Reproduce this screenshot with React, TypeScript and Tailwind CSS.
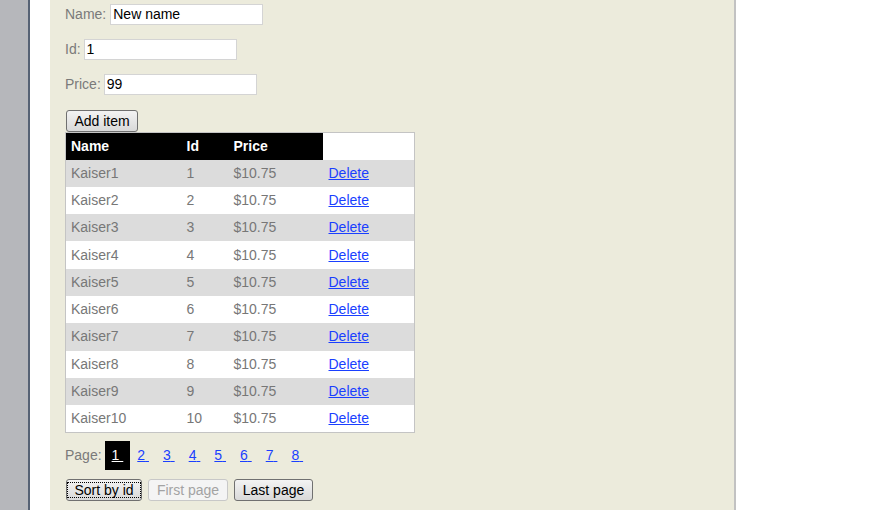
import React from 'react';

const rows = Array.from({ length: 10 }, (_, i) => ({ name: `Kaiser${i + 1}`, id: i + 1, price: '$10.75' }));
const pages = [2, 3, 4, 5, 6, 7, 8];

const btn =
  'h-[22px] px-0 whitespace-nowrap rounded-[3px] border border-[#707070] bg-gradient-to-b from-[#f3f3f3] to-[#d9d9d9] text-black text-[14px] leading-none';

export default function App() {
  return (
    <div className="flex h-[510px] w-full bg-white text-[14px] font-['Liberation_Sans',Arial,sans-serif] overflow-hidden">
      <div className="w-[28px] shrink-0 bg-[#b6b7bb]" />
      <div className="w-[2px] shrink-0 bg-[#566274]" />
      <div className="w-[20px] shrink-0 bg-white" />
      <div className="w-[684px] shrink-0 bg-[#ecebdc] pl-[15px] pt-[4px] flex flex-col items-start">
        <div className="flex items-center h-[21px] gap-[4px]">
          <span className="text-[#7a7a7a]">Name:</span>
          <input
            defaultValue="New name"
            className="w-[153px] h-[21px] bg-white border border-[#d4d4d4] px-[2px] text-black text-[14px] outline-none"
          />
        </div>
        <div className="flex items-center h-[21px] gap-[3px] mt-[14px]">
          <span className="text-[#7a7a7a]">Id:</span>
          <input
            defaultValue="1"
            className="w-[153px] h-[21px] bg-white border border-[#d4d4d4] px-[2px] text-black text-[14px] outline-none"
          />
        </div>
        <div className="flex items-center h-[21px] gap-[3px] mt-[14px]">
          <span className="text-[#7a7a7a]">Price:</span>
          <input
            defaultValue="99"
            className="w-[153px] h-[21px] bg-white border border-[#d4d4d4] px-[2px] text-black text-[14px] outline-none"
          />
        </div>
        <button className={`${btn} mt-[15px] ml-[1px] h-[21px] w-[72px]`}>Add item</button>
        <table className="w-[350px] border border-[#c4c4c4] bg-white border-collapse">
          <thead>
            <tr className="h-[27px]">
              <th className="w-[116px] bg-black text-white text-left font-bold pl-[5px]">Name</th>
              <th className="w-[47px] bg-black text-white text-left font-bold pl-[5px]">Id</th>
              <th className="w-[94px] bg-black text-white text-left font-bold pl-[5px]">Price</th>
              <th className="bg-white" />
            </tr>
          </thead>
          <tbody>
            {rows.map((r, i) => (
              <tr key={r.id} className={`h-[27.3px] ${i % 2 === 0 ? 'bg-[#dcdcdc]' : 'bg-white'} text-[#777777]`}>
                <td className="pl-[5px]">{r.name}</td>
                <td className="pl-[5px]">{r.id}</td>
                <td className="pl-[5px]">{r.price}</td>
                <td className="pl-[6px]">
                  <a href="#" className="text-[#1a3fff] underline">Delete</a>
                </td>
              </tr>
            ))}
          </tbody>
        </table>
        <div className="flex items-center mt-[8px] h-[29px]">
          <span className="text-[#7a7a7a] mr-[3px]">Page:</span>
          <span className="bg-black px-[7px] h-[29px] flex items-center">
            <a href="#" className="text-white underline">1&nbsp;</a>
          </span>
          {pages.map((p) => (
            <span key={p} className="px-[7px] h-[29px] flex items-center">
              <a href="#" className="text-[#1a3fff] underline">{p}&nbsp;</a>
            </span>
          ))}
        </div>
        <div className="flex items-center gap-[6px] mt-[9px] ml-[1px]">
          <button className={`${btn} w-[76px] p-[2px]`}>
            <span className="flex h-full w-full items-center justify-center border border-dotted border-black">Sort by id</span>
          </button>
          <button className="h-[22px] w-[80px] whitespace-nowrap rounded-[3px] border border-[#c8c8c8] bg-[#f4f4f4] text-[#a3a3a3] text-[14px] leading-none">
            First page
          </button>
          <button className={`${btn} w-[79px]`}>Last page</button>
        </div>
      </div>
      <div className="w-[2px] shrink-0 bg-[#c2c2c2]" />
      <div className="flex-1 bg-white" />
    </div>
  );
}
